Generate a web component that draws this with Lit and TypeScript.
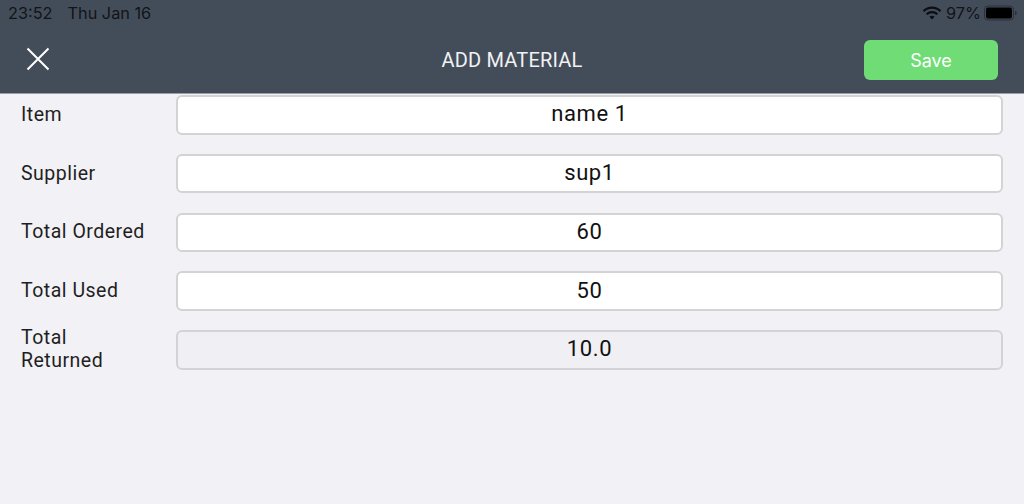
import { LitElement, html, css } from "lit";
import { customElement } from "lit/decorators.js";

const rows = [
  { label: "Item", value: "name 1", off: false },
  { label: "Supplier", value: "sup1", off: false },
  { label: "Total Ordered", value: "60", off: false },
  { label: "Total Used", value: "50", off: false },
  { label: "Total Returned", value: "10.0", off: true },
];

@customElement("app-root")
export class AppRoot extends LitElement {
  static styles = css`
    :host { display: block; width: 1024px; height: 504px; background: #f2f1f6; overflow: hidden; font-family: Roboto, sans-serif; color: #1c1c1e; }
    .top { height: 93px; background: #434d5a; border-bottom: 1px solid #9a9ea6; display: flex; flex-direction: column; }
    .status { height: 26px; display: flex; align-items: center; justify-content: space-between; padding: 0 7px 0 8px; font-family: Inter, "Liberation Sans", sans-serif; font-size: 16.3px; color: #111418; }
    .status-left { display: flex; gap: 15px; }
    .status-right { display: flex; align-items: center; gap: 4px; }
    .batt { margin-left: -1px; }
    .nav { flex: 1; display: flex; align-items: flex-start; justify-content: space-between; padding: 14px 26px 0 26px; position: relative; }
    .close { display: block; width: 24px; height: 24px; margin-top: 7px; }
    .title { position: absolute; left: 0; right: 0; top: 21px; text-align: center; font-size: 20px; line-height: 26px; letter-spacing: 0.2px; color: #f1f2f3; font-weight: 400; }
    .save { width: 134px; height: 40px; border-radius: 6px; background: #6fdc76; color: #fff; display: flex; align-items: center; justify-content: center; font-family: Inter, "Liberation Sans", sans-serif; font-size: 18px; }
    .form { display: flex; flex-direction: column; gap: 19.25px; padding: 1px 21px 0 21px; }
    .row { display: flex; align-items: center; height: 39.5px; }
    .label { width: 125px; margin-right: 30px; padding-bottom: 1px; font-size: 19.5px; line-height: 23px; letter-spacing: 0.5px; color: #1f1f22; }
    .input { flex: 1; height: 39.5px; box-sizing: border-box; border: 2px solid #d3d3d6; border-radius: 6px; background: #fff; display: flex; align-items: center; justify-content: center; padding-bottom: 2px; font-size: 22px; letter-spacing: 0.6px; color: #111; }
    .input.off { background: #f0eff4; }
  `;

  render() {
    return html`
      <div class="top">
        <div class="status">
          <div class="status-left"><span>23:52</span><span>Thu Jan 16</span></div>
          <div class="status-right">
            <svg width="20" height="14" viewBox="0 0 20 14">
              <path d="M1.5 5.2 A12 12 0 0 1 18.5 5.2" fill="none" stroke="#0c0e11" stroke-width="2.2"/>
              <path d="M4.6 8.2 A8 8 0 0 1 15.4 8.2" fill="none" stroke="#0c0e11" stroke-width="2.2"/>
              <path d="M7.4 10.8 A4 4 0 0 1 12.6 10.8 L10 13.4 Z" fill="#0c0e11"/>
            </svg>
            <span>97%</span>
            <svg class="batt" width="33" height="16" viewBox="0 0 33 16">
              <rect x="0.5" y="1" width="29" height="14" rx="3.5" fill="none" stroke="#2b303a"/>
              <rect x="2" y="2.5" width="26" height="11" rx="2" fill="#000"/>
              <rect x="31" y="6" width="1.5" height="4" fill="#2b303a"/>
            </svg>
          </div>
        </div>
        <div class="nav">
          <svg class="close" viewBox="0 0 24 24"><path d="M1.5 1.5 L22.5 22.5 M22.5 1.5 L1.5 22.5" stroke="#fff" stroke-width="2" fill="none"/></svg>
          <div class="title">ADD MATERIAL</div>
          <div class="save">Save</div>
        </div>
      </div>
      <div class="form">
        ${rows.map(r => html`
          <div class="row">
            <div class="label">${r.label}</div>
            <div class="input ${r.off ? "off" : ""}">${r.value}</div>
          </div>`)}
      </div>
    `;
  }
}
